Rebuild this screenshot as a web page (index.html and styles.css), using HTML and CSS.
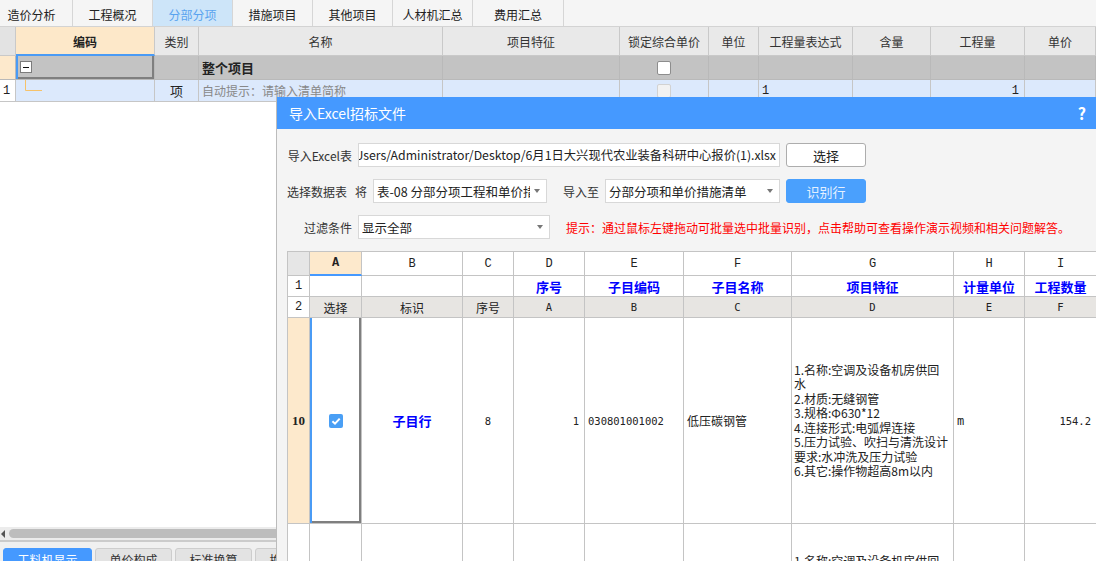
FILE: index.html
```html
<!DOCTYPE html>
<html lang="zh-CN">
<head>
<meta charset="utf-8">
<title>分部分项</title>
<link rel="stylesheet" href="styles.css">
</head>
<body>
<div class="app">
  <nav class="tabs">
    <div class="tab first">造价分析</div>
    <div class="tab">工程概况</div>
    <div class="tab active">分部分项</div>
    <div class="tab">措施项目</div>
    <div class="tab">其他项目</div>
    <div class="tab">人材机汇总</div>
    <div class="tab last">费用汇总</div>
  </nav>

  <div class="table">
    <div class="row head">
      <div class="c rn"></div>
      <div class="c code">编码</div>
      <div class="c">类别</div>
      <div class="c">名称</div>
      <div class="c">项目特征</div>
      <div class="c">锁定综合单价</div>
      <div class="c">单位</div>
      <div class="c">工程量表达式</div>
      <div class="c">含量</div>
      <div class="c">工程量</div>
      <div class="c">单价</div>
    </div>
    <div class="row group">
      <div class="c rn orange"></div>
      <div class="c code selcell"><span class="minus"></span></div>
      <div class="c"></div>
      <div class="c l strong">整个项目</div>
      <div class="c"></div>
      <div class="c"><span class="cb"></span></div>
      <div class="c"></div>
      <div class="c"></div>
      <div class="c"></div>
      <div class="c"></div>
      <div class="c"></div>
    </div>
    <div class="row item">
      <div class="c rn white l num">1</div>
      <div class="c code tree"><svg width="30" height="12" viewBox="0 0 30 12"><path d="M9.5 0 V10.5 H26" fill="none" stroke="#f6c26a" stroke-width="1"/></svg></div>
      <div class="c kind">项</div>
      <div class="c l hint">自动提示：请输入清单简称</div>
      <div class="c"></div>
      <div class="c"><span class="cb dis"></span></div>
      <div class="c"></div>
      <div class="c l num">1</div>
      <div class="c"></div>
      <div class="c r num">1</div>
      <div class="c"></div>
    </div>
  </div>

  <div class="filler"></div>

  <div class="hscroll"><span class="arrow"></span><span class="thumb"></span></div>

  <div class="bottom">
    <div class="btab on">工料机显示</div>
    <div class="btab">单价构成</div>
    <div class="btab">标准换算</div>
    <div class="btab">换算信息</div>
  </div>
</div>

<section class="dialog">
  <header class="dlg-title"><span>导入Excel招标文件</span><span class="help">?</span></header>
  <div class="dlg-body">
    <div class="frow">
      <span class="lbl">导入Excel表</span>
      <div class="field path"><span>Users/Administrator/Desktop/6月1日大兴现代农业装备科研中心报价(1).xlsx</span></div>
      <button class="btn">选择</button>
    </div>
    <div class="frow">
      <span class="lbl2">选择数据表</span><span class="jiang">将</span>
      <div class="field sel s1"><span class="val">表-08 分部分项工程和单价措施</span><i class="caret"></i></div>
      <span class="lbl3">导入至</span>
      <div class="field sel s2"><span class="val">分部分项和单价措施清单</span><i class="caret"></i></div>
      <button class="btn primary">识别行</button>
    </div>
    <div class="frow">
      <span class="lbl">过滤条件</span>
      <div class="field sel s3"><span class="val">显示全部</span><i class="caret"></i></div>
      <span class="tip">提示：通过鼠标左键拖动可批量选中批量识别，点击帮助可查看操作演示视频和相关问题解答。</span>
    </div>

    <div class="sheet">
      <div class="s rh"></div>
      <div class="s colh selcol">A</div>
      <div class="s colh">B</div>
      <div class="s colh">C</div>
      <div class="s colh">D</div>
      <div class="s colh">E</div>
      <div class="s colh">F</div>
      <div class="s colh">G</div>
      <div class="s colh">H</div>
      <div class="s colh">I</div>

      <div class="s rnum">1</div>
      <div class="s"></div>
      <div class="s"></div>
      <div class="s"></div>
      <div class="s blue">序号</div>
      <div class="s blue">子目编码</div>
      <div class="s blue">子目名称</div>
      <div class="s blue">项目特征</div>
      <div class="s blue">计量单位</div>
      <div class="s blue">工程数量</div>

      <div class="s rnum">2</div>
      <div class="s g">选择</div>
      <div class="s g">标识</div>
      <div class="s g">序号</div>
      <div class="s g mono">A</div>
      <div class="s g mono">B</div>
      <div class="s g mono">C</div>
      <div class="s g mono">D</div>
      <div class="s g mono">E</div>
      <div class="s g mono">F</div>

      <div class="s rnum hot">10</div>
      <div class="s selcell"><span class="chk"><svg width="14" height="14" viewBox="0 0 14 14"><path d="M3.4 7.3 L6 9.7 L10.7 4.6" fill="none" stroke="#fff" stroke-width="2"/></svg></span></div>
      <div class="s blue">子目行</div>
      <div class="s mono">8</div>
      <div class="s r mono">1</div>
      <div class="s l mono">030801001002</div>
      <div class="s l">低压碳钢管</div>
      <div class="s l feat">1.名称:空调及设备机房供回<br>水<br>2.材质:无缝钢管<br>3.规格:Φ630*12<br>4.连接形式:电弧焊连接<br>5.压力试验、吹扫与清洗设计<br>要求:水冲洗及压力试验<br>6.其它:操作物超高8m以内</div>
      <div class="s l mono big">m</div>
      <div class="s r mono">154.2</div>

      <div class="s rnum tall"></div>
      <div class="s tall"></div>
      <div class="s tall"></div>
      <div class="s tall"></div>
      <div class="s tall"></div>
      <div class="s tall"></div>
      <div class="s tall"></div>
      <div class="s tall l feat top">1.名称:空调及设备机房供回<br>水</div>
      <div class="s tall"></div>
      <div class="s tall"></div>
    </div>
  </div>
</section>
</body>
</html>
```

FILE: styles.css
```css
* { box-sizing: border-box; }
html, body { margin: 0; padding: 0; }
body {
  width: 1096px;
  height: 561px;
  overflow: hidden;
  position: relative;
  background: #fff;
  color: #333;
  font-family: "Noto Sans CJK SC", "Microsoft YaHei", sans-serif;
  font-size: 12px;
}
.app { display: flex; flex-direction: column; height: 561px; }

/* top tabs */
.tabs {
  flex: none;
  display: flex;
  height: 27px;
  background: #f5f5f5;
  border-bottom: 1px solid #d3d3d3;
}
.tab {
  width: 80px;
  border-right: 1px solid #d6d6d6;
  display: flex;
  align-items: center;
  justify-content: center;
  padding-top: 2px;
  color: #222;
  font-size: 12px;
}
.tab.first { width: 73px; padding-right: 9px; }
.tab.last { width: 91px; }
.tab.active { background: #cde5f9; color: #5aa3ef; }

/* main table */
.table { flex: none; }
.row {
  display: grid;
  grid-template-columns: 16px 139px 44px 244px 177px 89px 50px 94px 78px 94px 71px;
}
.row .c {
  border-right: 1px solid #c9c9c9;
  border-bottom: 1px solid #c9c9c9;
  display: flex;
  align-items: center;
  justify-content: center;
  white-space: nowrap;
  overflow: hidden;
}
.row .l { justify-content: flex-start; padding-left: 3px; }
.row .r { justify-content: flex-end; padding-right: 5px; }
.row.head { height: 29px; background: #e9e9e9; }
.row.head .c { color: #333; padding-top: 1px; }
.row.head .rn { background: #e3e3e3; }
.row.head .code {
  background: #fde8c9;
  border-bottom: 2px solid #4a9bf5;
  font-weight: bold;
  color: #222;
}
.row.group { height: 24px; background: #c3c3c3; }
.row.group .c { border-color: #b9b9b9; }
.rn.orange { background: #fde9cc; }
.rn.white { background: #fff; }
.selcell { box-shadow: inset 2px 0 0 #4a9bf5, inset -2px -2px 0 #7f7f7f; }
.row .code.selcell { justify-content: flex-start; padding-left: 4px; padding-bottom: 1px; }
.minus {
  width: 12px;
  height: 12px;
  background: #fff;
  border: 1px solid #7c7c7c;
  display: flex;
  align-items: center;
  justify-content: center;
}
.minus::before { content: ""; width: 6px; height: 1px; background: #111; }
.strong { font-weight: bold; font-size: 13px; color: #222; }
.cb {
  width: 14px;
  height: 14px;
  background: #fff;
  border: 1px solid #8d8d8d;
  border-radius: 2px;
}
.cb.dis { background: #f2f2f2; border-color: #d2d2d2; }
.row.item { height: 22px; background: #dce9fc; }
.row.item .c { border-color: #c6c6c6; }
.row .tree { justify-content: flex-start; align-items: flex-start; }
.tree svg { display: block; }
.kind { font-size: 13px; color: #222; }
.hint { color: #888; }
.num { font-family: "Liberation Mono", "DejaVu Sans Mono", monospace; font-size: 12px; color: #222; }

.filler { flex: 1; background: #fff; }

.hscroll {
  flex: none;
  height: 15px;
  background: #ececec;
  display: flex;
  align-items: center;
  border-bottom: 2px solid #cbcbcb;
}
.arrow {
  width: 0; height: 0;
  border-top: 4px solid transparent;
  border-bottom: 4px solid transparent;
  border-right: 4px solid #555;
  margin-left: 1px;
}
.thumb {
  margin-left: 4px;
  width: 300px;
  height: 9px;
  border-radius: 5px;
  background: #bdbdbd;
}
.bottom {
  flex: none;
  height: 19px;
  background: #f0f0f0;
  display: flex;
  gap: 3px;
  padding: 6px 0 0 3px;
  overflow: hidden;
}
.btab {
  width: 77px;
  height: 22px;
  background: #e3e3e3;
  border: 1px solid #cdcdcd;
  border-radius: 3px 3px 0 0;
  text-align: center;
  padding-top: 2px;
  color: #333;
  flex: none;
}
.btab.on { width: 89px; background: #4599ff; border-color: #4599ff; color: #fff; }

/* dialog */
.dialog {
  position: absolute;
  left: 276px;
  top: 97px;
  right: 0;
  bottom: 0;
  background: #f4f4f4;
  border-left: 1px solid #bcbcbc;
  display: flex;
  flex-direction: column;
}
.dlg-title {
  flex: none;
  height: 32px;
  background: #4599ff;
  color: #fff;
  font-size: 14px;
  display: flex;
  align-items: center;
  justify-content: space-between;
  padding: 0 10px 0 12px;
}
.help { font-weight: bold; font-size: 16px; }
.dlg-body { padding: 14px 0 0 10px; flex: 1; overflow: hidden; }
.frow { display: flex; align-items: center; height: 24px; margin-bottom: 12px; white-space: nowrap; }
.lbl { width: 65px; text-align: right; margin-right: 6px; color: #333; }
.lbl2 { margin-right: 8px; color: #333; }
.jiang { margin-right: 6px; color: #333; }
.lbl3 { margin-left: 16px; margin-right: 6px; color: #333; width: 36px; }
.field {
  height: 24px;
  background: #fff;
  border: 1px solid #d8d8d8;
  display: flex;
  align-items: center;
  overflow: hidden;
  color: #222;
  font-size: 12.5px;
}
.path { width: 422px; justify-content: flex-end; padding-right: 3px; font-size: 12.3px; }
.path span { flex: none; }
.sel { padding-left: 3px; }
.sel .val { flex: 1; min-width: 0; overflow: hidden; }
.s1 { width: 174px; }
.s2 { width: 175px; }
.s3 { width: 192px; }
.caret {
  flex: none;
  width: 0; height: 0;
  border-left: 3.5px solid transparent;
  border-right: 3.5px solid transparent;
  border-top: 4px solid #777;
  margin: 0 6px 0 4px;
}
.btn {
  width: 80px;
  height: 24px;
  margin-left: 6px;
  background: #fff;
  border: 1px solid #adadad;
  border-radius: 3px;
  font-family: "Noto Sans CJK SC", sans-serif;
  font-size: 13px;
  color: #222;
  padding: 0;
}
.btn.primary { background: #4aa0fd; border-color: #4aa0fd; color: #e4f0ff; }
.tip { margin-left: 16px; color: #ff0000; }

/* spreadsheet */
.sheet {
  display: grid;
  grid-template-columns: 22px 52px 101px 51px 71px 99px 108px 162px 71px 72px;
  grid-template-rows: 24px 21px 21px 206px 120px;
  border-top: 1px solid #c4c4c4;
  border-left: 1px solid #c4c4c4;
  background: #fff;
}
.s {
  border-right: 1px solid #c4c4c4;
  border-bottom: 1px solid #c4c4c4;
  display: flex;
  align-items: center;
  justify-content: center;
  background: #fff;
  overflow: hidden;
  white-space: nowrap;
  color: #222;
  font-size: 12px;
}
.s.l { justify-content: flex-start; padding-left: 3px; }
.s.r { justify-content: flex-end; padding-right: 5px; }
.s.rh { background: #e6e6e6; }
.s.colh { font-family: "Liberation Mono", "DejaVu Sans Mono", monospace; font-size: 12px; color: #222; }
.s.selcol { background: #fde9cc; border-bottom: 2px solid #4599ff; font-weight: bold; }
.s.rnum { font-family: "Liberation Mono", "DejaVu Sans Mono", monospace; }
.s.hot { background: #fde9cc; font-family: "Liberation Serif", serif; font-weight: bold; font-size: 13px; }
.s.blue { color: #0000ff; font-weight: bold; font-size: 13px; }
.s.g { background: #e7e5e2; }
.s.mono { font-family: "DejaVu Sans Mono", "Liberation Mono", monospace; font-size: 10.5px; }
.s.mono.big { font-size: 12px; }
.s.feat { white-space: normal; line-height: 14.5px; font-size: 12px; padding-left: 2px; }
.s.top { align-items: flex-start; padding-top: 30px; }
.chk {
  width: 14px;
  height: 14px;
  background: #4a9ff5;
  border-radius: 2px;
  display: block;
}
.chk svg { display: block; }
```
